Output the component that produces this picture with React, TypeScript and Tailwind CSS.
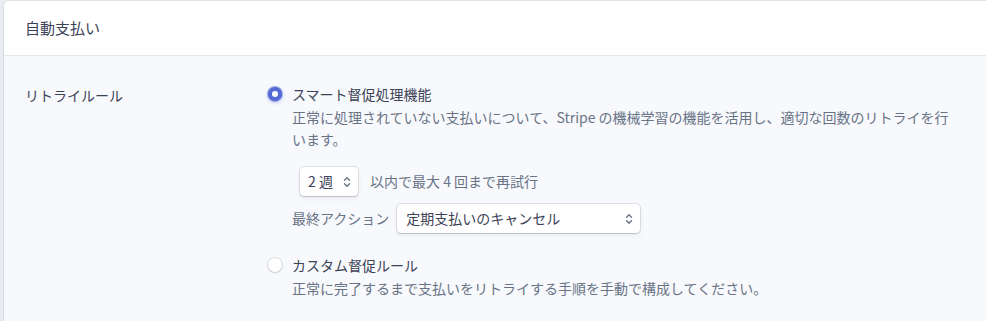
import React from 'react';

const font = { fontFamily: '"Noto Sans CJK JP", "Noto Sans", sans-serif' };

const Chevrons = () => (
  <svg width="8" height="12" viewBox="0 0 8 12" fill="none" className="text-[#697386]">
    <path d="M1.5 4.2 4 1.7l2.5 2.5M1.5 7.8 4 10.3l2.5-2.5" stroke="currentColor" strokeWidth="1.4" strokeLinecap="round" strokeLinejoin="round" />
  </svg>
);

const Radio = ({ checked }: { checked?: boolean }) =>
  checked ? (
    <span className="mt-[5px] flex h-[14px] w-[14px] shrink-0 items-center justify-center rounded-full bg-[#5469d4] shadow-[0_0_0_1px_rgba(84,105,212,0.5),0_2px_4px_rgba(84,105,212,0.3)]">
      <span className="h-[6px] w-[6px] rounded-full bg-white" />
    </span>
  ) : (
    <span className="mt-[5px] h-[14px] w-[14px] shrink-0 rounded-full bg-white shadow-[0_0_0_1px_rgba(60,66,87,0.12),0_1px_2px_rgba(0,0,0,0.12)]" />
  );

export default function App() {
  return (
    <div className="h-[321px] w-[986px] overflow-hidden bg-[#e9edf2] pl-1 pt-px" style={font}>
      <div className="h-[330px] w-[1000px] rounded-tl-[5px] bg-[#f7f9fc] shadow-[0_0_0_1px_rgba(60,66,87,0.06),0_1px_3px_rgba(0,0,0,0.06)]">
        {/* Header */}
        <div className="flex h-[55px] items-center rounded-tl-[5px] border-b border-[#e3e8ee] bg-white px-[21px]">
          <h1 className="text-[15px] text-[#3c4257]">自動支払い</h1>
        </div>

        {/* Body */}
        <div className="flex px-[21px] pt-[26px]">
          <div className="w-[243px] shrink-0 pt-[1px] text-[14px] leading-[24px] text-[#3c4257]">リトライルール</div>

          <div className="flex flex-col text-[14px]">
            <div className="flex gap-[10px]">
              <Radio checked />
              <div>
                <div className="leading-[24px] text-[#3c4257]">スマート督促処理機能</div>
                <p className="w-[670px] leading-[22px] text-[#697386]">
                  正常に処理されていない支払いについて、Stripe の機械学習の機能を活用し、適切な回数のリトライを行います。
                </p>

                <div className="mt-[17px] flex items-center gap-[12px]">
                  <div className="ml-[8px] flex h-[29px] w-[58px] items-center justify-between rounded-[4px] bg-white pl-[8px] pr-[7px] text-[#3c4257] shadow-[0_0_0_1px_rgba(60,66,87,0.12),0_2px_5px_rgba(60,66,87,0.08),0_1px_1px_rgba(0,0,0,0.12)]">
                    <span>2 週</span>
                    <Chevrons />
                  </div>
                  <span className="text-[#697386]">以内で最大 4 回まで再試行</span>
                </div>

                <div className="mt-[8px] flex items-center gap-[8px]">
                  <span className="text-[#697386]">最終アクション</span>
                  <div className="flex h-[29px] w-[243px] items-center justify-between rounded-[4px] bg-white pl-[9px] pr-[7px] text-[#3c4257] shadow-[0_0_0_1px_rgba(60,66,87,0.12),0_2px_5px_rgba(60,66,87,0.08),0_1px_1px_rgba(0,0,0,0.12)]">
                    <span>定期支払いのキャンセル</span>
                    <Chevrons />
                  </div>
                </div>
              </div>
            </div>

            <div className="mt-[20px] flex gap-[10px]">
              <Radio />
              <div>
                <div className="leading-[24px] text-[#3c4257]">カスタム督促ルール</div>
                <p className="leading-[22px] text-[#697386]">正常に完了するまで支払いをリトライする手順を手動で構成してください。</p>
              </div>
            </div>
          </div>
        </div>
      </div>
    </div>
  );
}
